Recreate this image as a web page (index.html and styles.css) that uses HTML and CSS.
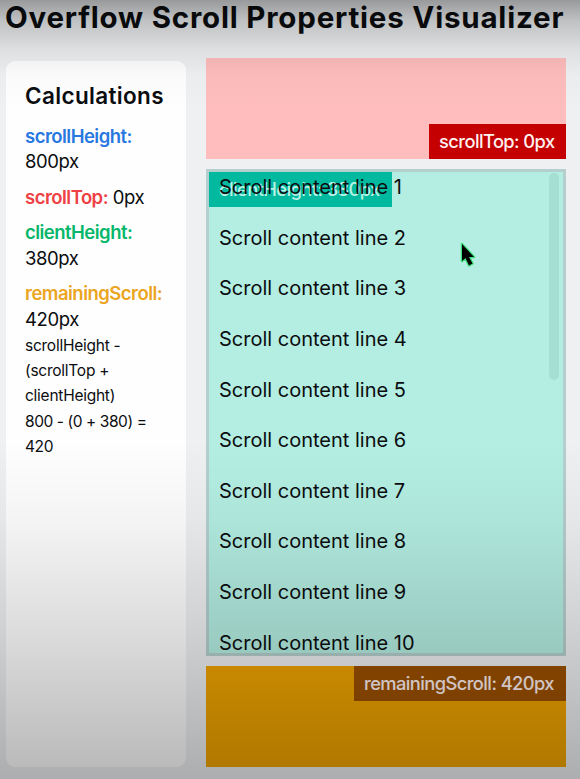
FILE: index.html
```html
<!DOCTYPE html>
<html lang="en">
<head>
<meta charset="utf-8">
<title>Overflow Scroll Properties Visualizer</title>
<link rel="stylesheet" href="styles.css">
</head>
<body>
<h1><span>Overflow Scroll Properties Visualizer</span></h1>
<main class="layout">
  <aside class="panel">
    <h2><span>Calculations</span></h2>
    <p><strong class="blue">scrollHeight:</strong><br><span>800px</span></p>
    <p><strong class="red">scrollTop:</strong> <span>0px</span></p>
    <p><strong class="green">clientHeight:</strong><br><span>380px</span></p>
    <p><strong class="amber">remainingScroll:</strong><br><span>420px</span></p>
    <div class="formula">scrollHeight -<br>(scrollTop +<br>clientHeight)<br><span class="sum">800 - (0 + 380) =<br>420</span></div>
  </aside>
  <section class="visual">
    <div class="top-area"><div class="tag tag-top">scrollTop: 0px</div></div>
    <div class="viewport">
      <div class="tag tag-client">clientHeight: 380px</div>
      <div class="lines">
        <div>Scroll content line 1</div>
        <div>Scroll content line 2</div>
        <div>Scroll content line 3</div>
        <div>Scroll content line 4</div>
        <div>Scroll content line 5</div>
        <div>Scroll content line 6</div>
        <div>Scroll content line 7</div>
        <div>Scroll content line 8</div>
        <div>Scroll content line 9</div>
        <div>Scroll content line 10</div>
      </div>
      <div class="thumb"></div>
    </div>
    <div class="rest-area"><div class="tag tag-rest">remainingScroll: 420px</div></div>
  </section>
</main>
<div class="shade"></div>
<svg class="cursor" width="22" height="30" viewBox="0 0 22 30"><path d="M5 4V21L8.5 18L12 25.500L15.500 23.500L12 17H17Z" fill="#000" stroke="#3fe07c" stroke-width="2.500" stroke-linejoin="round" paint-order="stroke"/></svg>
</body>
</html>
```
FILE: styles.css
```css
* { box-sizing: border-box; }
body {
  margin: 0;
  width: 580px;
  height: 779px;
  overflow: hidden;
  position: relative;
  background: #eef0f2;
  color: #0b0d10;
  font-family: Inter, "Liberation Sans", sans-serif;
}
h1 {
  margin: 0;
  height: 58px;
  padding-left: 5px;
  font-size: 29.5px;
  line-height: 35px;
  font-weight: 700;
  letter-spacing: 0.8px;
  white-space: nowrap;
}
.layout {
  display: grid;
  grid-template-columns: 180px 360px;
  column-gap: 20px;
  padding-left: 6px;
  height: 709px;
}
.panel {
  margin-top: 3px;
  padding: 20px 0 0 19px;
  border-radius: 9px;
  background: #fefefe;
  font-size: 18.5px;
  line-height: 25.4px;
  letter-spacing: -0.4px;
  white-space: nowrap;
}
h2 {
  margin: 0 0 12.5px;
  font-size: 22.5px;
  line-height: 30px;
  font-weight: 600;
  letter-spacing: 0.35px;
}
.panel p { margin: 0 0 10.2px; }
.panel p:last-of-type { margin-bottom: 0; }
strong { font-weight: 600; letter-spacing: -0.53px; }
.blue { color: #2878df; }
.red { color: #ee4145; }
.green { color: #06b76b; }
.amber { color: #eba51e; }
.formula { padding-top: 0.6px; font-size: 15.5px; letter-spacing: -0.25px; }
.sum { letter-spacing: -0.42px; }
.visual {
  display: flex;
  flex-direction: column;
  gap: 10px;
}
.top-area {
  height: 101px;
  background: #ffbdbd;
  display: flex;
  justify-content: flex-end;
  align-items: flex-end;
}
.viewport {
  position: relative;
  height: 487px;
  border: 3px solid #b4cfce;
  background: #b4eee2;
  overflow: hidden;
}
.lines {
  position: relative;
  padding-left: 10px;
  font-size: 20px;
  line-height: 30px;
  white-space: nowrap;
  display: grid;
  grid-auto-rows: 50.65px;
}
.thumb {
  position: absolute;
  top: 1px;
  right: 4px;
  width: 10px;
  height: 207px;
  border-radius: 5px;
  background: #a5dfd2;
}
.rest-area {
  height: 101px;
  background: #f0a400;
  display: flex;
  justify-content: flex-end;
  align-items: flex-start;
}
.tag {
  height: 35px;
  padding-left: 10px;
  font-size: 18.3px;
  line-height: 35px;
  font-weight: 500;
  letter-spacing: -0.57px;
  color: #fff1f0;
  white-space: nowrap;
}
.tag-top { width: 137px; background: #c40000; }
.tag-rest { width: 212px; background: #9c5000; }
.tag-client {
  position: absolute;
  top: 0;
  left: 0;
  width: 183px;
  background: #00b99f;
  color: #b9f3e5;
}
.shade {
  position: absolute;
  inset: 0;
  pointer-events: none;
  background:
    linear-gradient(rgba(0,0,0,.36), rgba(0,0,0,.2) 20px, rgba(0,0,0,.07) 50px, rgba(0,0,0,.015) 75px, transparent 110px),
    linear-gradient(transparent 440px, rgba(0,0,0,.04) 520px, rgba(0,0,0,.14) 640px, rgba(0,0,0,.28) 779px);
}
.cursor {
  position: absolute;
  left: 457px;
  top: 240px;
}
```
